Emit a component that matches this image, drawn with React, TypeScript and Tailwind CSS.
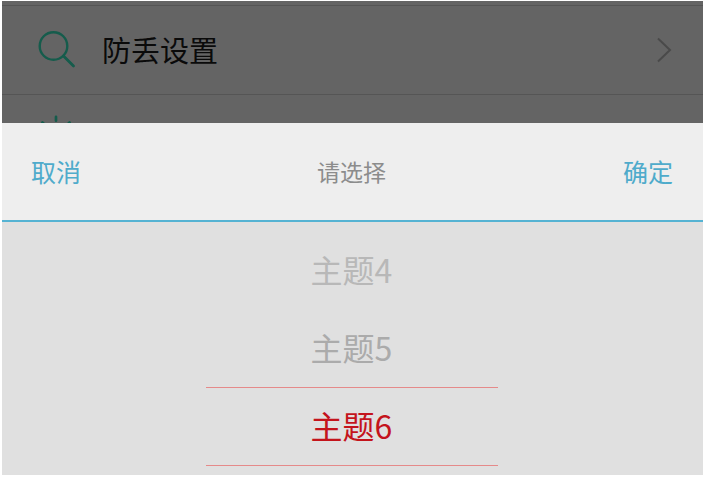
import { Sun } from 'lucide-react'

const font = { cjk: "font-['Noto_Sans_CJK_SC','Noto_Sans',sans-serif]" }

function Magnifier() {
  return (
    <svg width="40" height="40" viewBox="0 0 40 40" fill="none" stroke="#155c4c" strokeWidth="2.4" strokeLinecap="round">
      <circle cx="16.5" cy="16" r="13.8" />
      <path d="M26.5 26L36.5 36" strokeWidth="2.8" />
    </svg>
  )
}

export default function App() {
  return (
    <div className={`w-[706px] h-[479px] bg-white pl-[2px] pr-[3px] pt-[1px] overflow-hidden ${font.cjk}`}>
      {/* dimmed list behind the sheet */}
      <div className="h-[122px] bg-[#646464] pt-[4px] overflow-hidden">
        <div className="h-[90px] border-y border-[#555555] flex items-center pl-[35px] pr-[31px]">
          <Magnifier />
          <span className="ml-[25px] pb-[1px] text-[29px] leading-none text-[#0a0a0a]">防丢设置</span>
          <svg className="ml-auto" width="16" height="26" viewBox="0 0 16 26" fill="none" stroke="#4a4a4a" strokeWidth="2">
            <path d="M2 1.5L14 13L2 24.5" />
          </svg>
        </div>
        <div className="pl-[31px] pt-[18px]">
          <Sun size={46} color="#155c4c" strokeWidth={1.4} />
        </div>
      </div>

      {/* picker header */}
      <div className="h-[97px] bg-[#eeeeee] flex items-center justify-between pl-[29px] pr-[30px]">
        <span className="text-[25px] leading-none text-[#4fabcb]">取消</span>
        <span className="pr-[1px] text-[23px] leading-none text-[#8c8c8c]">请选择</span>
        <span className="text-[25px] leading-none text-[#4fabcb]">确定</span>
      </div>
      <div className="h-[2px] bg-[#55b3d3]" />

      {/* picker wheel */}
      <div className="h-[253px] bg-[#e0e0e0] pt-[9px] pr-[2px] flex flex-col items-center">
        <div className="h-[78px] pb-[3px] flex items-center justify-center text-[32px] leading-none text-[#b8b8b8]">主题4</div>
        <div className="h-[78px] pb-[3px] flex items-center justify-center text-[32px] leading-none text-[#ababab]">主题5</div>
        <div className="h-[79px] w-[292px] border-y border-[#e58a8a] pb-[3px] flex items-center justify-center text-[32px] leading-none text-[#c4141c]">主题6</div>
      </div>
    </div>
  )
}
